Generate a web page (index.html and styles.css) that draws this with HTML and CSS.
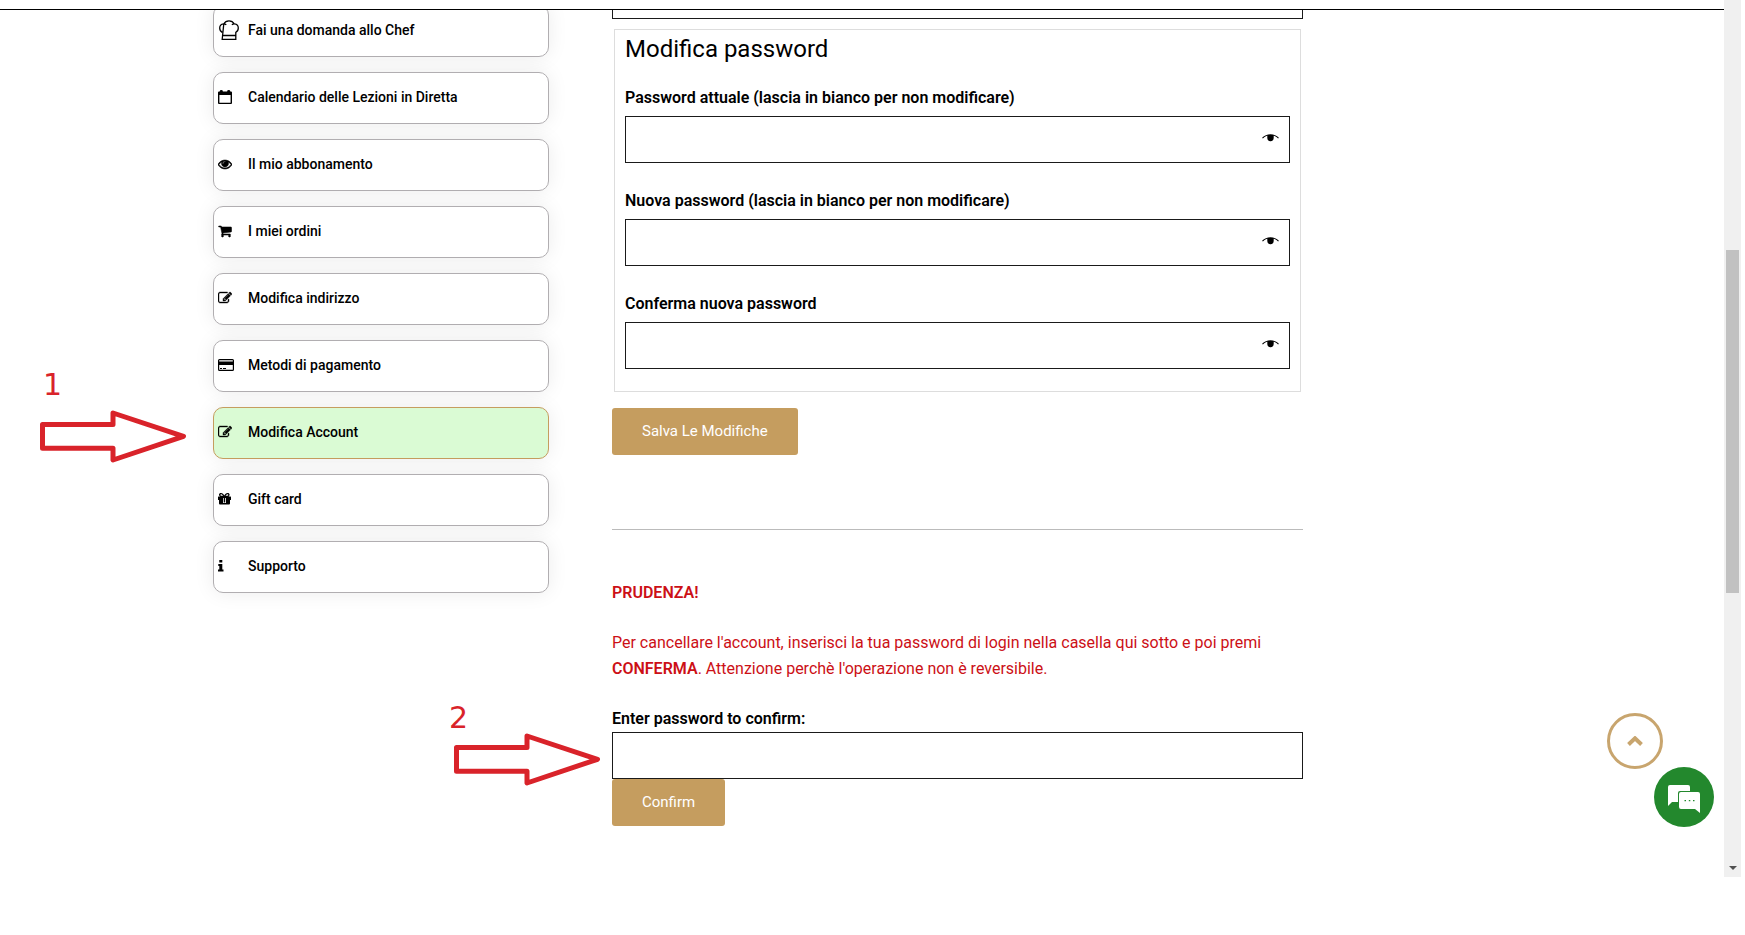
FILE: index.html
```html
<!DOCTYPE html>
<html lang="it">
<head>
  <meta charset="UTF-8">
  <title>Modifica Account</title>
  <link rel="stylesheet" href="styles.css">
</head>
<body>

  <!-- icone riutilizzate -->
  <svg class="defs" aria-hidden="true">
    <symbol id="edit" viewBox="0 0 1792 1792">
      <path stroke="#000" stroke-width="50" d="M888 1184l116-116-152-152-116 116v56h96v96h56zm440-720q-16-16-33 1l-350 350q-17 17-1 33t33-1l350-350q17-17 1-33zm80 594v190q0 119-84.500 203.500t-203.500 84.500h-832q-119 0-203.500-84.500t-84.500-203.500v-832q0-119 84.500-203.500t203.500-84.500h832q63 0 117 25 15 7 18 23 3 17-9 29l-49 49q-14 14-32 8-23-6-45-6h-832q-66 0-113 47t-47 113v832q0 66 47 113t113 47h832q66 0 113-47t47-113v-126q0-13 9-22l64-64q15-15 35-7t20 29zm-96-738l288 288-672 672h-288v-288zm444 132l-92 92-288-288 92-92q28-28 68-28t68 28l152 152q28 28 28 68t-28 68z"/>
    </symbol>
    <symbol id="show" viewBox="0 0 17 8">
      <path d="M.5 4.200C3 1.600 5.600 .8 8.500 .8s5.500 .8 8 3.400" fill="none" stroke="#000" stroke-width="1.100"/>
      <path d="M5.300 1h6.400v2.800a3.200 3.400 0 0 1-6.400 0z"/>
    </symbol>
    <symbol id="arrow" viewBox="0 0 148 54">
      <path d="M2.500 14.500H73V3L143.500 26.300 73 50V38.200H2.500z" fill="none" stroke="#d9232a" stroke-width="5" stroke-linejoin="round"/>
    </symbol>
  </svg>

  <div class="browser">
    <div class="page">
      <header class="topbar"></header>

      <div class="container">

        <!-- Menu account -->
        <nav class="menu">
          <a href="#" class="item">
            <svg class="icon chef" viewBox="0 0 20 20" fill="none" stroke="#000" stroke-width="1.300"><path d="M3.200 12.300C1.600 11.500.7 9.800.7 8c0-2.300 1.800-4.200 4.100-4.200 1 0 1.800.3 2.500.9M4.800 3.800C5.900 1.800 7.800.8 10 .8s4.100 1 5.200 3c2.300 0 4.100 1.900 4.100 4.200 0 1.800-.9 3.500-2.500 4.300V19.300H3.200zM15.200 3.800c-.9 0-1.700.3-2.300.9M3.200 15.500h13.600"/></svg>
            <span>Fai una domanda allo Chef</span>
          </a>
          <a href="#" class="item">
            <svg class="icon" viewBox="0 0 14 14"><path fill-rule="evenodd" d="M1 1.500h.8V1Q1.800 0 3.300 0t1.500 1v.5h4.400V1q0-1 1.500-1t1.500 1v.5h.8q1 0 1 1V13q0 1-1 1H1q-1 0-1-1V2.500q0-1 1-1zM1.400 5v7.700h11.200V5z"/></svg>
            <span>Calendario delle Lezioni in Diretta</span>
          </a>
          <a href="#" class="item">
            <svg class="icon" viewBox="0 0 1792 1792"><path stroke="#000" stroke-width="70" d="M1664 960q-152-236-381-353 61 104 61 225 0 185-131.500 316.500t-316.500 131.500-316.500-131.500-131.500-316.500q0-121 61-225-229 117-381 353 133 205 333.500 326.500t434.500 121.500 434.500-121.500 333.500-326.500zm-720-384q0-20-14-34t-34-14q-125 0-214.500 89.500t-89.500 214.500q0 20 14 34t34 14 34-14 14-34q0-86 61-147t147-61q20 0 34-14t14-34zm848 384q0 34-20 69-140 230-376.500 368.500t-499.500 138.500-499.500-139-376.500-368q-20-35-20-69t20-69q140-229 376.500-368t499.500-139 499.500 139 376.500 368q20 35 20 69z"/></svg>
            <span>Il mio abbonamento</span>
          </a>
          <a href="#" class="item">
            <svg class="icon" viewBox="0 0 1792 1792"><path stroke="#000" stroke-width="70" d="M704 1536q0 52-38 90t-90 38-90-38-38-90 38-90 90-38 90 38 38 90zm896 0q0 52-38 90t-90 38-90-38-38-90 38-90 90-38 90 38 38 90zm128-1088v512q0 24-16.500 42.500t-40.500 21.500l-1044 122q13 60 13 70 0 16-24 64h920q26 0 45 19t19 45-19 45-45 19h-1024q-26 0-45-19t-19-45q0-11 8-31.500t16-36 21.500-40 15.500-29.500l-177-823h-204q-26 0-45-19t-19-45 19-45 45-19h256q16 0 28.500 6.500t19.500 15.500 13 24.500 8 26 5.500 29.500 4.500 26h1201q26 0 45 19t19 45z"/></svg>
            <span>I miei ordini</span>
          </a>
          <a href="#" class="item">
            <svg class="icon"><use href="#edit"/></svg>
            <span>Modifica indirizzo</span>
          </a>
          <a href="#" class="item">
            <svg class="icon wide" viewBox="0 0 16 14"><path fill-rule="evenodd" d="M1.500 1h13q1.500 0 1.500 1.500v9q0 1.500-1.500 1.500h-13Q0 13 0 11.500v-9Q0 1 1.500 1zM1.200 2.200v1.300h13.600V2.200zM1.200 7v4.800h13.600V7zM2 10h2v1H2zM5 10h3v1H5z"/></svg>
            <span>Metodi di pagamento</span>
          </a>
          <a href="#" class="item active">
            <svg class="icon"><use href="#edit"/></svg>
            <span>Modifica Account</span>
          </a>
          <a href="#" class="item">
            <svg class="icon" viewBox="0 0 14 14"><path fill-rule="evenodd" d="M.5 4.500h3C1.500 4.500 1 3.500 1 2.700 1 1.700 1.800 1 3 1c1.500 0 2.500 1.200 3.300 2.500C7.100 2.200 8 1 9.600 1c1.200 0 2 .7 2 1.700 0 .8-.6 1.800-2.100 1.800h3q.5 0 .5.500v3h-1v3.500q0 1-1 1H2q-1 0-1-1V8H0V5q0-.5.500-.5zM3 2.200c-.9 0-.9 1.500.2 1.500h2C4.500 2.900 3.900 2.200 3 2.200zM9.600 2.200c-.8 0-1.500.7-2.100 1.500h1.900c1.200 0 1.200-1.500.2-1.500zM5 6v5h3V6zM5.700 6h1.500v4.500H5.700z"/></svg>
            <span>Gift card</span>
          </a>
          <a href="#" class="item">
            <svg class="icon" viewBox="0 0 14 14"><path d="M1.300 1h3v2.600h-3zM.3 5h4v5.500h1.200v2H0v-2h1.300V7H.3z"/></svg>
            <span>Supporto</span>
          </a>
        </nav>

        <!-- Contenuto -->
        <main class="content">
          <form class="account">
            <input type="email" class="text" aria-label="Email">

            <fieldset>
              <legend>Modifica password</legend>
              <div class="field">
                <label for="attuale">Password attuale (lascia in bianco per non modificare)</label>
                <div class="password">
                  <input type="password" id="attuale" class="text">
                  <button type="button" class="show" aria-label="Mostra password"><svg><use href="#show"/></svg></button>
                </div>
              </div>
              <div class="field">
                <label for="nuova">Nuova password (lascia in bianco per non modificare)</label>
                <div class="password">
                  <input type="password" id="nuova" class="text">
                  <button type="button" class="show" aria-label="Mostra password"><svg><use href="#show"/></svg></button>
                </div>
              </div>
              <div class="field">
                <label for="conferma">Conferma nuova password</label>
                <div class="password">
                  <input type="password" id="conferma" class="text">
                  <button type="button" class="show" aria-label="Mostra password"><svg><use href="#show"/></svg></button>
                </div>
              </div>
            </fieldset>

            <button type="submit" class="btn">Salva Le Modifiche</button>
          </form>

          <hr>

          <form class="delete">
            <p class="warning"><strong>PRUDENZA!</strong></p>
            <p class="warning">Per cancellare l'account, inserisci la tua password di login nella casella qui sotto e poi premi <strong>CONFERMA</strong>. Attenzione perchè l'operazione non è reversibile.</p>
            <label for="elimina">Enter password to confirm:</label>
            <input type="password" id="elimina" class="text">
            <button type="submit" class="btn">Confirm</button>
          </form>
        </main>
      </div>

      <!-- Pulsanti flottanti -->
      <a href="#" class="to-top" aria-label="Torna su">
        <svg viewBox="0 0 16 10"><path d="M1.500 8.500L8 2.300l6.500 6.200" fill="none" stroke="#c8a56e" stroke-width="4"/></svg>
      </a>
      <button class="chat" aria-label="Chat">
        <svg viewBox="0 0 32 28" fill="#fff">
          <path d="M2 0h18q2 0 2 2v4H12q-2 0-2 2v9H4l-4 4V2q0-2 2-2z"/>
          <path fill-rule="evenodd" d="M13 7h17q2 0 2 2v19l-5-4H13q-2 0-2-2V9q0-2 2-2zM16.500 15v1.200h1.500v-1.200zM20.800 15v1.200h1.500v-1.200zM25 15v1.200h1.500v-1.200z"/>
        </svg>
      </button>

      <!-- Passi della guida -->
      <div class="step step-1"><span>1</span><svg><use href="#arrow"/></svg></div>
      <div class="step step-2"><span>2</span><svg><use href="#arrow"/></svg></div>
    </div>

    <div class="scrollbar">
      <div class="thumb"></div>
      <svg viewBox="0 0 8 4"><path d="M0 0h8L4 4z" fill="#505050"/></svg>
    </div>
  </div>

</body>
</html>
```
FILE: styles.css
```css
* {
  box-sizing: border-box;
}

body {
  margin: 0;
  background: #fff;
  color: #000;
  font-family: Roboto, sans-serif;
  font-size: 16px;
  line-height: 26px;
}

.defs {
  display: none;
}

.browser {
  display: flex;
  padding-right: 4px;
}

.page {
  position: relative;
  flex: 1;
  min-width: 0;
}

.topbar {
  height: 10px;
  border-bottom: 1px solid #000;
}

.container {
  display: grid;
  grid-template-columns: 336px minmax(0, 691px);
  gap: 63px;
  max-width: 1298px;
  margin: 0 auto;
  padding-bottom: 51px;
  clip-path: inset(0 -60px);
}

/* Menu */
.menu {
  display: flex;
  flex-direction: column;
  gap: 15px;
  margin-top: -5px;
}

.item {
  display: grid;
  grid-template-columns: 30px 1fr;
  align-items: center;
  height: 52px;
  padding: 0 4px 3px;
  border: 1px solid #b1aeb1;
  border-radius: 10px;
  background: #fff;
  box-shadow: 0 0 20px rgba(0, 0, 0, 0.08);
  color: #000;
  font-size: 14px;
  font-weight: 500;
  line-height: 24px;
  text-decoration: none;
}

.item.active {
  background: #dafbd4;
  border-color: #c59d5f;
}

.icon {
  width: 14px;
  height: 14px;
}

.icon.wide {
  width: 16px;
}

.icon.chef {
  width: 20px;
  height: 20px;
  margin-left: 1px;
}

/* Contenuto */
.content {
  margin-top: -38px;
}

.text {
  display: block;
  width: 100%;
  height: 47px;
  padding: 0 12px;
  border: 1px solid #1a1a1a;
  border-radius: 0;
  background: #fff;
  font: inherit;
}

fieldset {
  margin: 10px 2px 16px;
  padding: 0 10px 22px;
  border: 1px solid #ddd;
}

legend {
  float: left;
  width: 100%;
  margin-bottom: 18px;
  padding: 0;
  font-size: 24px;
  font-weight: 400;
  line-height: 38px;
}

label {
  display: block;
  font-weight: 600;
}

.field {
  clear: both;
}

.field + .field {
  margin-top: 26px;
}

.field label {
  margin-bottom: 6px;
  line-height: 24px;
}

.password {
  position: relative;
}

.show {
  position: absolute;
  top: 12px;
  right: 11px;
  display: flex;
  padding: 6px 0;
  border: 0;
  background: none;
}

.show svg {
  width: 17px;
  height: 8px;
}

.btn {
  display: block;
  height: 47px;
  padding: 0 30px 2px;
  border: 0;
  border-radius: 3px;
  background: #c59d5f;
  color: #fff;
  font: 15px Roboto, sans-serif;
}

hr {
  margin: 74px 0 50px;
  border: 0;
  border-top: 1px solid #bbb;
}

.warning {
  margin: 0 0 24px;
  color: #cc1016;
  font-weight: 400;
}

.warning strong {
  font-weight: 600;
}

/* Pulsanti flottanti */
.to-top {
  position: absolute;
  right: 61px;
  bottom: 108px;
  display: flex;
  align-items: center;
  justify-content: center;
  width: 56px;
  height: 56px;
  border: 3px solid #c8a56e;
  border-radius: 50%;
}

.to-top svg {
  width: 16px;
  height: 10px;
}

.chat {
  position: absolute;
  right: 10px;
  bottom: 50px;
  display: flex;
  align-items: center;
  justify-content: center;
  width: 60px;
  height: 60px;
  padding: 4px 0 0;
  border: 0;
  border-radius: 50%;
  background: #23882d;
}

.chat svg {
  width: 32px;
  height: 28px;
}

/* Frecce */
.step {
  position: absolute;
  color: #d9232a;
  font-family: "DejaVu Sans", sans-serif;
  font-size: 30px;
  line-height: 50px;
}

.step span {
  display: block;
  padding-left: 3px;
}

.step svg {
  display: block;
  width: 148px;
  height: 54px;
}

.step-1 {
  left: 40px;
  top: 360px;
}

.step-2 {
  left: 454px;
  top: 683px;
}

.step-2 span {
  margin-left: -8px;
  line-height: 70px;
  height: 50px;
}

/* Scrollbar */
.scrollbar {
  display: flex;
  flex-direction: column;
  align-items: center;
  width: 17px;
  padding: 250px 0 7px;
  background: #f0f0f0;
}

.thumb {
  width: 13px;
  height: 343px;
  margin-bottom: auto;
  background: #c1c1c1;
}

.scrollbar svg {
  width: 8px;
  height: 4px;
}
```
